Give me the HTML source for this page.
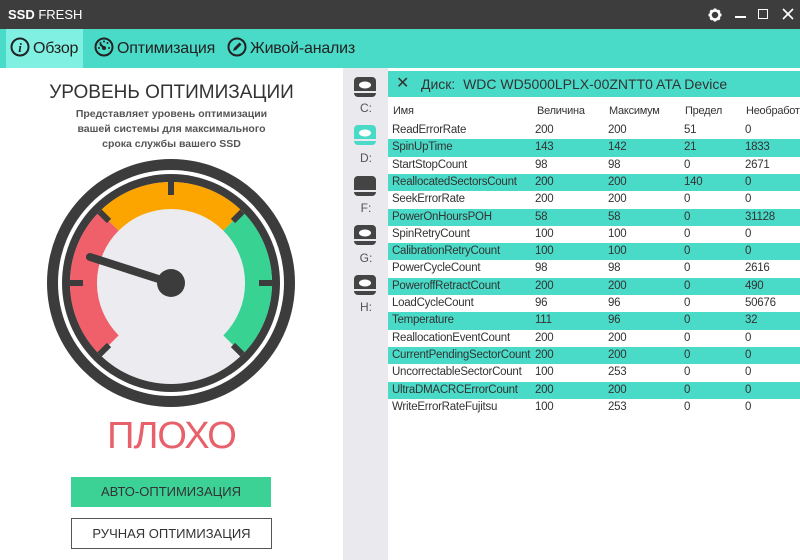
<!DOCTYPE html><html><head><meta charset="utf-8"><style>
*{margin:0;padding:0;box-sizing:border-box}
body{width:800px;height:560px;overflow:hidden;font-family:"Liberation Sans",sans-serif;background:#fff;position:relative}
.abs{position:absolute}
#title{left:0;top:0;width:800px;height:29px;background:#3d3d3d;color:#fff;font-size:13px}
#tabs{left:0;top:29px;width:800px;height:39px;background:#4adbc8}
.tab{position:absolute;top:0;height:39px;line-height:39px;font-size:16px;color:#222;letter-spacing:-0.2px}
.tab svg{margin-right:3px}
#side{left:343px;top:68px;width:45px;height:492px;background:#e9e9ee}
#hdr{left:388px;top:71px;width:412px;height:26px;background:#4adbc8;font-size:14px;color:#333;line-height:26px}
.row{position:absolute;left:388px;width:412px;height:17.3px;font-size:11.5px;color:#333;line-height:17px;letter-spacing:-0.25px}
.row span{position:absolute}
.t{background:#4adbc8}
.drv{position:absolute;left:352px;font-size:12px;color:#555;width:28px;text-align:center}
</style></head><body>
<div id="title" class="abs"><span style="position:absolute;left:8px;top:7px"><b>SSD</b> FRESH</span>
<svg class="abs" style="left:708px;top:8px" width="14" height="14" viewBox="0 0 14 14"><circle cx="7" cy="7" r="4.5" fill="none" stroke="#fff" stroke-width="2.5"/><g stroke="#fff" stroke-width="2.5"><line x1="7" y1="0.5" x2="7" y2="3"/><line x1="7" y1="11" x2="7" y2="13.5"/><line x1="0.5" y1="7" x2="3" y2="7"/><line x1="11" y1="7" x2="13.5" y2="7"/><line x1="2.4" y1="2.4" x2="4" y2="4"/><line x1="10" y1="10" x2="11.6" y2="11.6"/><line x1="2.4" y1="11.6" x2="4" y2="10"/><line x1="10" y1="4" x2="11.6" y2="2.4"/></g></svg>
<div class="abs" style="left:735px;top:16px;width:11px;height:2px;background:#fff"></div>
<div class="abs" style="left:758px;top:9px;width:10px;height:10px;border:1.5px solid #fff"></div>
<svg class="abs" style="left:782px;top:8px" width="12" height="12"><path d="M1 1L11 11M11 1L1 11" stroke="#fff" stroke-width="1.6"/></svg>
</div>
<div id="tabs" class="abs">
<div class="abs" style="left:6px;top:0;width:77px;height:39px;background:#7ff0e2"></div>
<div class="tab" style="left:10px"><svg style="vertical-align:-4px" width="20" height="20"><circle cx="10" cy="10" r="8.5" fill="none" stroke="#222" stroke-width="2"/><text x="10" y="15" font-size="13" font-style="italic" font-weight="bold" text-anchor="middle" font-family="Liberation Serif" fill="#222">i</text></svg>Обзор</div>
<div class="tab" style="left:94px"><svg style="vertical-align:-4px" width="20" height="20"><circle cx="10" cy="10" r="8.5" fill="none" stroke="#222" stroke-width="2"/><path d="M10 11L6 7" stroke="#222" stroke-width="2"/><circle cx="10" cy="11" r="2" fill="#222"/><g fill="#222"><circle cx="5" cy="11" r="1"/><circle cx="6.5" cy="6" r="1"/><circle cx="10" cy="4.5" r="1"/><circle cx="13.5" cy="6" r="1"/><circle cx="15" cy="11" r="1"/></g></svg>Оптимизация</div>
<div class="tab" style="left:227px"><svg style="vertical-align:-4px" width="20" height="20"><circle cx="10" cy="10" r="8.5" fill="none" stroke="#222" stroke-width="2"/><path d="M6 14L7 11L12.5 5.5L14.5 7.5L9 13Z" fill="#222"/></svg>Живой-анализ</div>
</div>
<div class="abs" style="left:0;top:82px;width:343px;text-align:center;font-size:19px;color:#333">УРОВЕНЬ ОПТИМИЗАЦИИ</div>
<div class="abs" style="left:0;top:107px;width:343px;text-align:center;font-size:10.5px;font-weight:bold;color:#555;line-height:15px">Представляет уровень оптимизации<br>вашей системы для максимального<br>срока службы вашего SSD</div>
<svg class="abs" style="left:46px;top:158px" width="250" height="250" viewBox="-125 -125 250 250">
<circle r="124" fill="#3c3c3c"/><circle r="113" fill="#fff"/><circle r="109" fill="#3c3c3c"/><circle r="101" fill="#ececf0"/>
<g fill="none" stroke-width="27">
<path d="M-61.9 61.9A87.5 87.5 0 0 1 -61.9 -61.9" stroke="#f0606a"/>
<path d="M-61.9 -61.9A87.5 87.5 0 0 1 61.9 -61.9" stroke="#fca400"/>
<path d="M61.9 -61.9A87.5 87.5 0 0 1 61.9 61.9" stroke="#38d293"/>
</g>
<g stroke="#3c3c3c" stroke-width="6">
<line x1="0" y1="-101" x2="0" y2="-88"/><line x1="-101" y1="0" x2="-88" y2="0"/><line x1="101" y1="0" x2="88" y2="0"/>
<line x1="-71.4" y1="-71.4" x2="-62" y2="-62"/><line x1="71.4" y1="-71.4" x2="62" y2="-62"/>
<line x1="-71.4" y1="71.4" x2="-62" y2="62"/><line x1="71.4" y1="71.4" x2="62" y2="62"/>
</g>
<line x1="0" y1="0" x2="-81" y2="-26" stroke="#3c3c3c" stroke-width="8" stroke-linecap="round"/>
<circle r="14" fill="#3c3c3c"/>
</svg>
<div class="abs" style="left:0;top:415px;width:343px;text-align:center;font-size:38px;color:#e8606a;letter-spacing:-1px">ПЛОХО</div>
<div class="abs" style="left:71px;top:477px;width:200px;height:30px;background:#3cd296;text-align:center;line-height:30px;font-size:13px;color:#333">АВТО-ОПТИМИЗАЦИЯ</div>
<div class="abs" style="left:71px;top:518px;width:201px;height:31px;border:1px solid #555;text-align:center;line-height:29px;font-size:13px;color:#333">РУЧНАЯ ОПТИМИЗАЦИЯ</div>
<div id="side" class="abs"></div>
<svg class="abs" style="left:0;top:0" width="800" height="560">
<g id="d"><rect x="354" y="77" width="22" height="20" rx="4" fill="#444"/><rect x="354" y="91" width="22" height="2" fill="#e9e9ee"/><ellipse cx="365" cy="85" rx="6" ry="3.5" fill="#fff"/></g>
<g fill="#4adbc8"><rect x="354" y="125" width="22" height="20" rx="4"/><rect x="354" y="139" width="22" height="2" fill="#e9e9ee"/><ellipse cx="365" cy="133" rx="6" ry="3.5" fill="#fff"/></g>
<rect x="354" y="176" width="22" height="20" rx="4" fill="#444"/><rect x="354" y="190" width="22" height="2" fill="#e9e9ee"/>
<use href="#d" y="148"/><use href="#d" y="198"/>
</svg>
<div class="drv" style="top:101px">C:</div><div class="drv" style="top:151px">D:</div><div class="drv" style="top:201px">F:</div><div class="drv" style="top:251px">G:</div><div class="drv" style="top:300px">H:</div>
<div id="hdr" class="abs"><span style="position:absolute;left:8px;font-size:16px">✕</span><span style="position:absolute;left:33px">Диск:&nbsp; WDC WD5000LPLX-00ZNTT0 ATA Device</span></div>
<div class="row" style="top:103px;font-size:11px"><span style="left:5px">Имя</span><span style="left:149px">Величина</span><span style="left:221px">Максимум</span><span style="left:297px">Предел</span><span style="left:358px">Необработ</span></div>
<div class="row" style="top:122px"><span style="left:4px">ReadErrorRate</span><span style="left:147px">200</span><span style="left:220px">200</span><span style="left:296px">51</span><span style="left:357px">0</span></div>
<div class="row t" style="top:139.3px"><span style="left:4px">SpinUpTime</span><span style="left:147px">143</span><span style="left:220px">142</span><span style="left:296px">21</span><span style="left:357px">1833</span></div>
<div class="row" style="top:156.6px"><span style="left:4px">StartStopCount</span><span style="left:147px">98</span><span style="left:220px">98</span><span style="left:296px">0</span><span style="left:357px">2671</span></div>
<div class="row t" style="top:173.9px"><span style="left:4px">ReallocatedSectorsCount</span><span style="left:147px">200</span><span style="left:220px">200</span><span style="left:296px">140</span><span style="left:357px">0</span></div>
<div class="row" style="top:191.2px"><span style="left:4px">SeekErrorRate</span><span style="left:147px">200</span><span style="left:220px">200</span><span style="left:296px">0</span><span style="left:357px">0</span></div>
<div class="row t" style="top:208.5px"><span style="left:4px">PowerOnHoursPOH</span><span style="left:147px">58</span><span style="left:220px">58</span><span style="left:296px">0</span><span style="left:357px">31128</span></div>
<div class="row" style="top:225.8px"><span style="left:4px">SpinRetryCount</span><span style="left:147px">100</span><span style="left:220px">100</span><span style="left:296px">0</span><span style="left:357px">0</span></div>
<div class="row t" style="top:243.1px"><span style="left:4px">CalibrationRetryCount</span><span style="left:147px">100</span><span style="left:220px">100</span><span style="left:296px">0</span><span style="left:357px">0</span></div>
<div class="row" style="top:260.4px"><span style="left:4px">PowerCycleCount</span><span style="left:147px">98</span><span style="left:220px">98</span><span style="left:296px">0</span><span style="left:357px">2616</span></div>
<div class="row t" style="top:277.7px"><span style="left:4px">PoweroffRetractCount</span><span style="left:147px">200</span><span style="left:220px">200</span><span style="left:296px">0</span><span style="left:357px">490</span></div>
<div class="row" style="top:295px"><span style="left:4px">LoadCycleCount</span><span style="left:147px">96</span><span style="left:220px">96</span><span style="left:296px">0</span><span style="left:357px">50676</span></div>
<div class="row t" style="top:312.3px"><span style="left:4px">Temperature</span><span style="left:147px">111</span><span style="left:220px">96</span><span style="left:296px">0</span><span style="left:357px">32</span></div>
<div class="row" style="top:329.6px"><span style="left:4px">ReallocationEventCount</span><span style="left:147px">200</span><span style="left:220px">200</span><span style="left:296px">0</span><span style="left:357px">0</span></div>
<div class="row t" style="top:346.9px"><span style="left:4px">CurrentPendingSectorCount</span><span style="left:147px">200</span><span style="left:220px">200</span><span style="left:296px">0</span><span style="left:357px">0</span></div>
<div class="row" style="top:364.2px"><span style="left:4px">UncorrectableSectorCount</span><span style="left:147px">100</span><span style="left:220px">253</span><span style="left:296px">0</span><span style="left:357px">0</span></div>
<div class="row t" style="top:381.5px"><span style="left:4px">UltraDMACRCErrorCount</span><span style="left:147px">200</span><span style="left:220px">200</span><span style="left:296px">0</span><span style="left:357px">0</span></div>
<div class="row" style="top:398.8px"><span style="left:4px">WriteErrorRateFujitsu</span><span style="left:147px">100</span><span style="left:220px">253</span><span style="left:296px">0</span><span style="left:357px">0</span></div>
</body></html>
